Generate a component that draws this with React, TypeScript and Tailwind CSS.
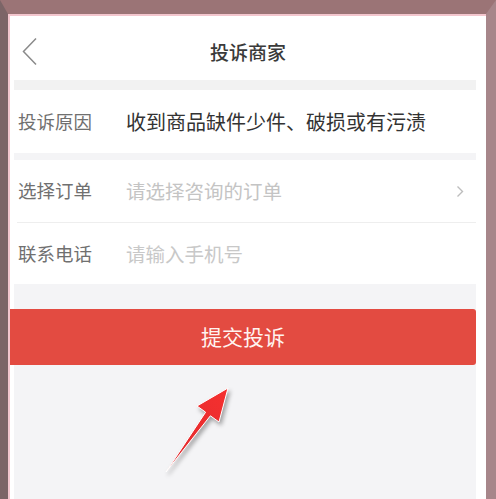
import React from "react";

export default function App() {
  const font = { fontFamily: '"Noto Sans CJK SC", "Noto Sans", sans-serif' };
  return (
    <div
      className="relative w-[496px] h-[499px] overflow-hidden bg-[#9b7476] border-t-[14px] border-t-[#9b7476] border-l-[8px] border-l-[#7c6567] border-r-[10px] border-r-[#a7868a] flex"
      style={font}
    >
      <div className="flex-1 flex flex-col bg-white border-t-2 border-l-2 border-[#f3c6ce]">
        {/* header */}
        <div className="h-[64px] shrink-0 flex items-center pt-[8px] relative">
          <svg className="absolute left-[11px] top-[21px]" width="17" height="29" viewBox="0 0 17 29">
            <path d="M15 1.5 L2.5 14.5 L15 27.5" fill="none" stroke="#8a8a8a" strokeWidth="1.5" />
          </svg>
          <div className="flex-1 text-center text-[19px] text-[#3a3a3a] font-medium">投诉商家</div>
        </div>
        <div className="flex-1 flex flex-col ml-[4px] mr-[10px] bg-[#f4f4f6]">
          <div className="h-[10px] shrink-0 bg-[#f2f2f2]" />
          <div className="h-[63px] shrink-0 bg-white flex items-center pl-[4px]">
            <span className="w-[108px] text-[18.5px] text-[#707070]">投诉原因</span>
            <span className="text-[20px] text-[#333]">收到商品缺件少件、破损或有污渍</span>
          </div>
          <div className="h-[7px] shrink-0" />
          <div className="bg-white flex flex-col">
            <div className="h-[62px] flex items-center pl-[4px] pr-[12px]">
              <span className="w-[108px] text-[18.5px] text-[#707070]">选择订单</span>
              <span className="flex-1 text-[19.5px] text-[#c4c4c4]">请选择咨询的订单</span>
              <svg width="8" height="13" viewBox="0 0 8 13">
                <path d="M1.5 1.5 L6.5 6.5 L1.5 11.5" fill="none" stroke="#bdbdbd" strokeWidth="1.4" />
              </svg>
            </div>
            <div className="h-px bg-[#eeeeee] ml-[3px]" />
            <div className="h-[61px] flex items-center pl-[4px]">
              <span className="w-[108px] text-[18.5px] text-[#707070]">联系电话</span>
              <span className="text-[19.5px] text-[#c8c8c8]">请输入手机号</span>
            </div>
          </div>
          <div className="h-[25px] shrink-0" />
          <div className="h-[56px] shrink-0 -ml-[4px] bg-[#e34b41] rounded-r-[3px] flex items-center justify-center">
            <span className="text-[21px] text-[#fff3f0]">提交投诉</span>
          </div>
        </div>
      </div>
      <svg
        className="absolute left-[-8px] top-[-14px] pointer-events-none"
        width="496"
        height="499"
        viewBox="0 0 496 499"
        style={{ filter: "drop-shadow(2px 3px 2px rgba(0,0,0,0.35))" }}
      >
        <defs>
          <linearGradient id="ar" x1="0" y1="1" x2="1" y2="0">
            <stop offset="0" stopColor="#e02a2e" />
            <stop offset="1" stopColor="#f5302f" />
          </linearGradient>
        </defs>
        <polygon
          points="166,472 205.6,412.2 197,406 228,388 219,422 210.4,415.8"
          fill="url(#ar)"
          stroke="#ffffff"
          strokeWidth="1"
          strokeLinejoin="round"
        />
      </svg>
    </div>
  );
}
